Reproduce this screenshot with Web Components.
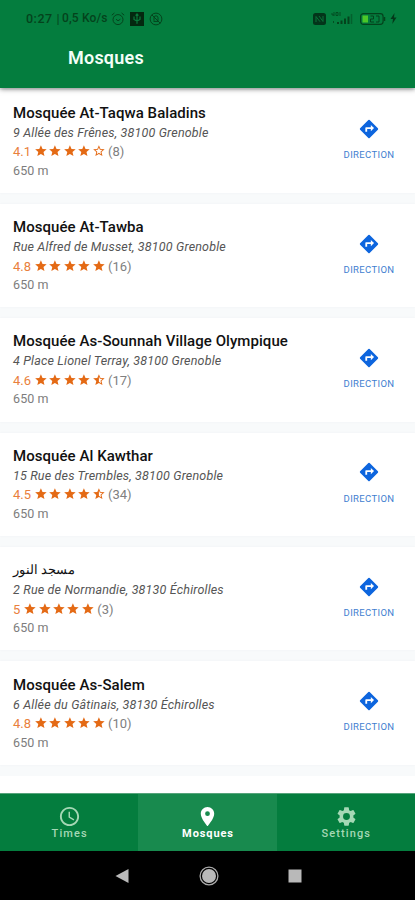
<!DOCTYPE html>
<html lang="fr"><head><meta charset="utf-8"><title>Mosques</title>
<style>html,body{margin:0;height:100%;background:#f8fafb}body{overflow:hidden;font-family:Roboto,"Noto Sans",sans-serif}</style></head>
<body>
<mosques-app></mosques-app>
<script>
const define = (name, html) => customElements.define(name, class extends HTMLElement {
  constructor() { super(); this.attachShadow({ mode: 'open' }); }
  connectedCallback() {
    const t = document.createElement('template');
    t.innerHTML = typeof html === 'function' ? html(this) : html;
    this.shadowRoot.replaceChildren(t.content.cloneNode(true));
  }
});

define('status-bar', `
<style>
:host{display:flex;align-items:center;height:37px;padding:0 17px 0 26px;box-sizing:border-box;color:#04431c;font-size:12.5px;line-height:15px}
.l,.r{display:flex;align-items:center}
.time{width:28px;letter-spacing:.5px;font-weight:500}.bar{width:8px;text-align:center}.net{width:48px;font-size:12px;letter-spacing:.15px;white-space:nowrap;font-weight:500}
.r{margin-left:auto}svg{display:block;fill:none;stroke:currentColor}
</style>
<div class="l"><span class="time">0:27</span><span class="bar">|</span><span class="net">0,5 Ko/s</span>
<svg width="14" height="14" viewBox="0 0 14 14" style="margin-left:1px"><circle cx="7" cy="7.6" r="5"/><path d="M.8 3.2 3.4 1M13.2 3.2 10.6 1M5 7.2l2 1.6 2.4-1.6"/></svg>
<svg width="14" height="14" viewBox="0 0 14 14" style="margin-left:5px"><path d="M0 0h14v14H0z" fill="#04280f" stroke="none"/><path d="M7 2.200v9.600M4 4.500v3l3 1.500 3-1.500v-3M5.600 3.600 7 2l1.400 1.600" stroke="#0a7a3c" stroke-width="1.200"/></svg>
<svg width="14" height="14" viewBox="0 0 14 14" style="margin-left:5px"><circle cx="7" cy="7" r="5.900"/><path d="m2.800 2.800 8.600 8.600M5 8.700V5.800a2 2 0 0 1 4 0v2.900M4.500 9.400h5"/></svg></div>
<div class="r">
<svg width="13" height="12" viewBox="0 0 13 12"><rect width="13" height="12" rx="2.500" fill="#03351a" stroke="none"/><path d="M3 9V3.500L7 8.700M6 3l4 5.500V3" stroke="#0a743a"/></svg>
<svg width="22" height="13" viewBox="0 0 22 13" style="margin-left:5px"><path d="M1 1v2h2M3 0v4M5 .5h2v3H5zM9 0v4M2.500 9v2" stroke-width=".8"/><path d="M7 10v2M10.500 8.500v3.500M14 6.500V12M17.500 4.500V12" stroke-width="2"/><path d="M20.500 2v10" stroke-width="1.500" opacity=".5"/></svg>
<svg width="26" height="12" viewBox="0 0 26 12" style="margin-left:7px"><rect x=".6" y=".6" width="22.500" height="10.800" rx="2.800" stroke-width="1.200"/><path d="M24.500 4v4" stroke-width="1.500"/><path d="M2.500 2.500h5.500v7H2.500z" fill="#4bc728" stroke="none"/><path d="M10.500 3h3v3h-3v3h3.500M16 3h3v6h-3" stroke-width="1"/></svg>
<svg width="7" height="11" viewBox="0 0 7 11" style="margin:0 1px 0 4px"><path d="M4.500 0 .5 6H3L2.300 11 6.500 4.500H4z" fill="#04381a" stroke="none"/></svg>
</div>`);

define('app-header', `
<style>:host{display:block;height:88px;flex:none;background:#047d3e;box-shadow:0 1px 5px rgba(0,0,0,.5);position:relative;z-index:2}
h1{margin:0;padding:9px 0 0 68px;font:600 18px/24px Roboto,sans-serif;letter-spacing:.22px;color:#f4fff8}</style>
<status-bar></status-bar><h1><slot></slot></h1>`);

const STAR = 'M12 17.270 18.180 21l-1.640-7.030L22 9.240l-7.190-.61L12 2 9.190 8.630 2 9.240l5.460 4.730L5.820 21z';
define('star-icon', h => {
  const k = h.getAttribute('kind');
  const d = k === 'full' ? STAR
    : k === 'half' ? 'M22 9.240l-7.190-.62L12 2 9.190 8.630 2 9.240l5.460 4.730L5.820 21 12 17.270 18.180 21l-1.630-7.030zM12 15.400V6.100l1.710 4.040 4.380.38-3.320 2.880 1 4.280z'
    : 'M22 9.240l-7.190-.62L12 2 9.190 8.630 2 9.240l5.460 4.730L5.820 21 12 17.270 18.180 21l-1.630-7.030zM12 15.400l-3.760 2.270 1-4.280-3.320-2.880 4.380-.38L12 6.100l1.710 4.040 4.380.38-3.320 2.880 1 4.280z';
  return `<style>:host{display:block;width:14.400px;height:15px}svg{display:block;fill:#e46a15}</style><svg width="13.800" height="13.800" viewBox="0 0 24 24"><path d="${d}"/></svg>`;
});

define('direction-button', `
<style>:host{display:flex;flex-direction:column;align-items:center;width:64px;color:#0d65de;padding-top:28.700px;box-sizing:border-box}
svg{display:block}span{font:400 9.500px/12px Roboto,sans-serif;letter-spacing:.35px;margin-top:9.300px;color:#3f80d0}</style>
<svg width="22" height="22" viewBox="0 0 24 24"><path fill="currentColor" d="M21.710 11.290l-9-9a1 1 0 0 0-1.410 0l-9 9a1 1 0 0 0 0 1.410l9 9a1 1 0 0 0 1.410 0l9-9a1 1 0 0 0 0-1.410zM14 14.500V12h-4v3H8v-4c0-.55.45-1 1-1h5V7.500l3.500 3.500z"/></svg><span>DIRECTION</span>`);

define('mosque-card', h => {
  const r = parseFloat(h.getAttribute('rating'));
  const kinds = [1,2,3,4,5].map(i => r >= i - .25 ? 'full' : r >= i - .75 ? 'half' : 'empty');
  return `
<style>
:host{display:flex;justify-content:space-between;height:103.400px;flex:none;background:#fff;padding:0 14px 0 13px;box-sizing:border-box;box-shadow:0 0 2px rgba(90,110,120,.06)}
.name{font-size:15px;font-weight:500;line-height:20px;height:20px;padding-top:13.200px;letter-spacing:.06px;color:#111;white-space:nowrap}
:host([lang=ar]) .name{font-size:13.200px;letter-spacing:0}
.addr{font-size:12.500px;font-style:italic;line-height:20px;letter-spacing:.175px;color:#555;white-space:nowrap}
.rate{display:flex;align-items:center;height:18px;font-size:13px;color:#808080}
.num{color:#e9803c;letter-spacing:0;margin-right:3px}.count{margin-left:2px}
.dist{font-size:12.500px;line-height:20px;color:#7d7d7d;letter-spacing:.1px}
</style>
<div><div class="name"><slot></slot></div><div class="addr">${h.getAttribute('address')}</div>
<div class="rate"><span class="num">${h.getAttribute('rating')}</span>${kinds.map(k => `<star-icon kind="${k}"></star-icon>`).join('')}<span class="count">(${h.getAttribute('reviews')})</span></div>
<div class="dist">650 m</div></div><direction-button></direction-button>`;
});

const ICONS = {
  clock: 'M11.990 2C6.470 2 2 6.480 2 12s4.470 10 9.990 10C17.520 22 22 17.520 22 12S17.520 2 11.990 2zM12 20c-4.420 0-8-3.580-8-8s3.580-8 8-8 8 3.580 8 8-3.580 8-8 8zm.5-13H11v6l5.250 3.150.75-1.230-4.500-2.670z',
  pin: 'M12 2C8.130 2 5 5.130 5 9c0 5.250 7 13 7 13s7-7.750 7-13c0-3.870-3.130-7-7-7zm0 9.500a2.500 2.500 0 0 1 0-5 2.500 2.500 0 0 1 0 5z',
  gear: 'M19.140 12.940c.04-.3.060-.61.060-.94 0-.32-.02-.64-.07-.94l2.030-1.580a.49.49 0 0 0 .12-.61l-1.920-3.320a.488.488 0 0 0-.59-.22l-2.390.96c-.5-.38-1.030-.7-1.620-.94l-.36-2.540a.484.484 0 0 0-.48-.41h-3.840c-.24 0-.43.17-.47.41l-.36 2.540c-.59.24-1.130.57-1.620.94l-2.390-.96c-.22-.08-.47 0-.59.22L2.740 8.870c-.12.21-.08.47.12.61l2.030 1.580c-.05.3-.09.63-.09.94s.02.64.07.94l-2.030 1.580a.49.49 0 0 0-.12.61l1.920 3.320c.12.22.37.29.59.22l2.390-.96c.5.38 1.030.7 1.620.94l.36 2.540c.05.24.24.41.48.41h3.840c.24 0 .44-.17.47-.41l.36-2.540c.59-.24 1.130-.56 1.620-.94l2.390.96c.22.08.47 0 .59-.22l1.920-3.320c.12-.22.07-.47-.12-.61zM12 15.600A3.600 3.600 0 1 1 12 8.400a3.600 3.600 0 0 1 0 7.200z'
};
define('nav-tab', h => `
<style>:host{display:flex;flex:1;flex-direction:column;align-items:center;padding:10.500px 0 0 1px;color:#a5d8b5;box-sizing:border-box}
:host([active]){background:#188a4e;color:#fff}
svg{display:block;fill:currentColor}span{font:500 11px/13px Roboto,sans-serif;letter-spacing:1.100px;margin-top:-1px}:host([active]) span{font-weight:700;letter-spacing:.9px}</style>
<svg width="23" height="23" viewBox="0 0 24 24"><path d="${ICONS[h.getAttribute('icon')]}"/></svg><span><slot></slot></span>`);

define('tab-bar', `<style>:host{display:flex;flex:none;height:58px;background:#047d3e;border-top:1px solid #56a47b;box-sizing:border-box}</style>
<nav-tab icon="clock">Times</nav-tab><nav-tab icon="pin" active>Mosques</nav-tab><nav-tab icon="gear">Settings</nav-tab>`);

define('system-bar', `<style>:host{display:flex;flex:none;height:49px;background:#000;align-items:center;justify-content:center;gap:69.500px;padding-left:2px;box-sizing:border-box}svg{display:block}</style>
<svg width="14" height="16" viewBox="0 0 14 16"><path d="M.5 8 13.500 1v14z" fill="#b9b9b9"/></svg>
<svg width="20" height="20" viewBox="0 0 20 20"><circle cx="10" cy="10" r="8.900" fill="none" stroke="#aaa" stroke-width="1.300"/><circle cx="10" cy="10" r="7" fill="#b9b9b9"/></svg>
<svg width="14" height="14" viewBox="0 0 14 14"><path d="M.5.5h13v13H.5z" fill="#b9b9b9"/></svg>`);

define('list-end', `<style>:host{display:block;flex:1;background:#fff}</style>`);

define('mosques-app', `
<style>:host{display:flex;flex-direction:column;height:900px;width:415px}
main{flex:1;min-height:0;overflow:hidden;display:flex;flex-direction:column;gap:11px;padding-top:1.500px;background:#f8fafb;box-sizing:border-box}</style>
<app-header>Mosques</app-header>
<main>
<mosque-card address="9 Allée des Frênes, 38100 Grenoble" rating="4.1" reviews="8">Mosquée At-Taqwa Baladins</mosque-card>
<mosque-card address="Rue Alfred de Musset, 38100 Grenoble" rating="4.8" reviews="16">Mosquée At-Tawba</mosque-card>
<mosque-card address="4 Place Lionel Terray, 38100 Grenoble" rating="4.6" reviews="17">Mosquée As-Sounnah Village Olympique</mosque-card>
<mosque-card address="15 Rue des Trembles, 38100 Grenoble" rating="4.5" reviews="34">Mosquée Al Kawthar</mosque-card>
<mosque-card lang="ar" address="2 Rue de Normandie, 38130 Échirolles" rating="5" reviews="3">مسجد النور</mosque-card>
<mosque-card address="6 Allée du Gâtinais, 38130 Échirolles" rating="4.8" reviews="10">Mosquée As-Salem</mosque-card>
<list-end></list-end>
</main>
<tab-bar></tab-bar><system-bar></system-bar>`);
</script>
</body></html>
